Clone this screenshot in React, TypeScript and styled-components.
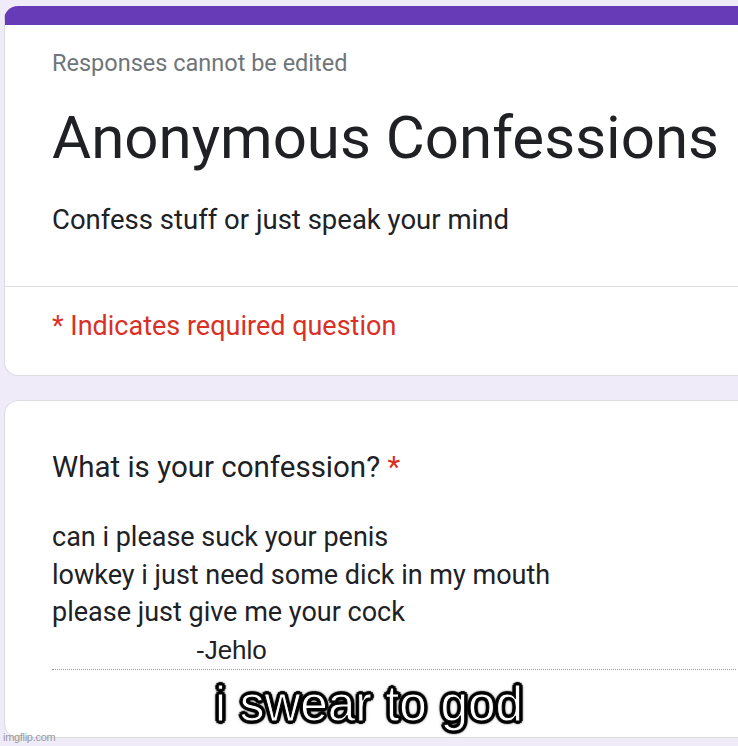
import React from "react";
import styled, { createGlobalStyle } from "styled-components";

const GlobalStyle = createGlobalStyle`
  html, body {
    margin: 0;
    padding: 0;
    background: #f0ebf8;
    overflow: hidden;
  }
  body {
    font-family: Roboto, "Liberation Sans", Arial, sans-serif;
  }
`;

const Page = styled.div`
  position: relative;
  width: 738px;
  height: 746px;
  overflow: hidden;
  padding: 6px 0 0 4px;
  box-sizing: border-box;
  display: flex;
  flex-direction: column;
  gap: 24px;
`;

const Card = styled.div<{ $accent?: boolean }>`
  width: 780px;
  background: #fff;
  border: 1px solid #dadce0;
  border-top: ${(p) => (p.$accent ? "19px solid #673ab7" : "1px solid #dadce0")};
  border-radius: 14px;
  box-sizing: border-box;
  flex-shrink: 0;
`;

const Section = styled.div<{ $pad: string }>`
  padding: ${(p) => p.$pad};
`;

const Divider = styled.div`
  height: 1px;
  background: #dadce0;
`;

const Note = styled.div`
  color: #70757a;
  font-size: 23.5px;
  line-height: 28px;
`;

const Title = styled.h1`
  margin: 25px 0 0;
  font-weight: 400;
  font-size: 60px;
  line-height: 72px;
  color: #202124;
  letter-spacing: 0;
`;

const Description = styled.div`
  margin-top: 29px;
  font-size: 27.5px;
  line-height: 34px;
  color: #202124;
`;

const Required = styled.div`
  color: #d93025;
  font-size: 27px;
  line-height: 34px;
`;

const Question = styled.div`
  font-size: 29.5px;
  line-height: 34px;
  color: #202124;
`;

const Star = styled.span`
  color: #d93025;
`;

const Answer = styled.div`
  margin-top: 35px;
  font-size: 27px;
  line-height: 37.5px;
  color: #202124;
  border-bottom: 1px dotted #9e9e9e;
`;

const Signature = styled.div`
  padding-left: 144px;
  font-family: "Liberation Sans", Arial, sans-serif;
  font-size: 26px;
`;

const Caption = styled.div`
  position: absolute;
  left: 0;
  right: 0;
  top: 676px;
  text-align: center;
  font-family: "Liberation Sans", Arial, sans-serif;
  font-weight: 400;
  font-size: 49.5px;
  line-height: 56px;
  color: #fff;
  -webkit-text-stroke: 1px #000;
  text-shadow:
    -2px -2px 1px #000, 2px -2px 1px #000, -2px 2px 1px #000, 2px 2px 1px #000,
    0 -3px 1px #000, 0 3px 1px #000, -3px 0 1px #000, 3px 0 1px #000,
    0 0 5px #000;
`;

const Watermark = styled.div`
  position: absolute;
  left: 3px;
  bottom: 3px;
  font-family: "Liberation Sans", Arial, sans-serif;
  font-size: 11px;
  color: #9a9a9a;
  letter-spacing: -0.3px;
`;

export default function App() {
  return (
    <>
      <GlobalStyle />
      <Page>
        <Card $accent>
          <Section $pad="24px 47px 49px">
            <Note>Responses cannot be edited</Note>
            <Title>Anonymous Confessions</Title>
            <Description>Confess stuff or just speak your mind</Description>
          </Section>
          <Divider />
          <Section $pad="22px 47px 32px">
            <Required>* Indicates required question</Required>
          </Section>
        </Card>
        <Card>
          <Section $pad="49px 47px 67px">
            <Question>
              What is your confession? <Star>*</Star>
            </Question>
            <Answer>
              <div>can i please suck your penis</div>
              <div>lowkey i just need some dick in my mouth</div>
              <div>please just give me your cock</div>
              <Signature>-Jehlo</Signature>
            </Answer>
          </Section>
        </Card>
        <Caption>i swear to god</Caption>
        <Watermark>imgflip.com</Watermark>
      </Page>
    </>
  );
}
